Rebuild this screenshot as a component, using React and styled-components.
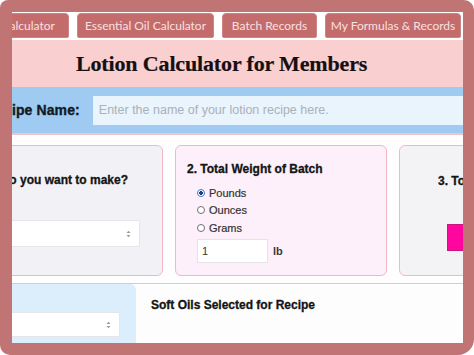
import React from "react";
import styled, { createGlobalStyle } from "styled-components";

const GlobalStyle = createGlobalStyle`
  html, body { margin: 0; padding: 0; background: #ffffff; }
  body { font-family: "Liberation Sans", Arial, sans-serif; }
  * { box-sizing: border-box; }
`;

const Frame = styled.div`
  width: 474px;
  height: 355px;
  background: #c07574;
  border-radius: 8px 10px 16px 10px;
  padding: 12px 11px 12px 12px;
  overflow: hidden;
`;

const Viewport = styled.div`
  width: 100%;
  height: 100%;
  overflow: hidden;
  background: #ffffff;
`;

const Page = styled.div`
  width: 720px;
  height: 100%;
  margin-left: -61px;
  display: flex;
  flex-direction: column;
`;

const TabBar = styled.div`
  height: 28px;
  padding-top: 1px;
  display: flex;
  gap: 8px;
  background: #ffffff;
`;

const Tab = styled.div`
  width: ${(p) => p.$w}px;
  height: 25px;
  flex: none;
  background: #c46b6c;
  border: 1px solid #cf8383;
  border-radius: 4px 4px 2px 2px;
  color: #f7e0e0;
  font-family: Lato, "Liberation Sans", sans-serif;
  font-size: 12px;
  display: flex;
  align-items: center;
  justify-content: center;
  white-space: nowrap;
`;

const Header = styled.div`
  height: 47px;
  background: #f9cfd0;
  display: flex;
  align-items: center;
  padding-left: 125px;
`;

const Title = styled.h1`
  margin: 0;
  font-family: "Liberation Serif", "Times New Roman", serif;
  font-weight: 700;
  font-size: 22px;
  letter-spacing: -0.15px;
  color: #161010;
  -webkit-text-stroke: 0.2px #161010;
  white-space: nowrap;
`;

const RecipeBar = styled.div`
  height: 48px;
  background: #9fcbf3;
  border-bottom: 2px solid #f3c3c9;
  display: flex;
  align-items: center;
  padding-left: 35px;
  gap: 13px;
`;

const RecipeLabel = styled.label`
  font-size: 14px;
  font-weight: 700;
  color: #131a22;
  -webkit-text-stroke: 0.35px #131a22;
  white-space: nowrap;
  letter-spacing: 0.1px;
`;

const RecipeInput = styled.input`
  width: 600px;
  height: 29px;
  border: none;
  outline: none;
  background: #e9f4fc;
  padding: 0 6px;
  font-family: "Liberation Sans", Arial, sans-serif;
  font-size: 12.5px;
  &::placeholder { color: #a9b1b9; }
`;

const CardsRow = styled.div`
  display: flex;
  gap: 12px;
  padding: 10px 0 7px;
  border-bottom: 1.5px solid #f4bcc4;
  background: #fefefe;
`;

const Card = styled.div`
  width: 212px;
  height: 131px;
  flex: none;
  background: ${(p) => p.$tint};
  border: 1.5px solid #f4b7c1;
  border-radius: 6px;
  display: flex;
  flex-direction: column;
  padding: 0 11px;
`;

const CardHeading = styled.div`
  margin-top: ${(p) => p.$top}px;
  margin-left: ${(p) => p.$indent || 0}px;
  font-size: 12px;
  line-height: 14px;
  font-weight: 700;
  color: #141414;
  -webkit-text-stroke: 0.3px #141414;
  white-space: nowrap;
`;

const SelectBox = styled.div`
  height: ${(p) => p.$h}px;
  margin: ${(p) => p.$m};
  background: #ffffff;
  border: 1px solid #e6e6ea;
  border-radius: 2px;
  display: flex;
  align-items: center;
  justify-content: flex-end;
  padding-right: 8px;
`;

const RadioList = styled.div`
  margin-top: 8px;
  padding-left: 10px;
  display: flex;
  flex-direction: column;
`;

const RadioRow = styled.div`
  height: 17.5px;
  display: flex;
  align-items: center;
  gap: 4px;
`;

const RadioDot = styled.span`
  width: 8px;
  height: 8px;
  border-radius: 50%;
  border: 1px solid ${(p) => (p.$checked ? "#3a78d8" : "#6f6f6f")};
  background: ${(p) => (p.$checked ? "radial-gradient(circle, #1d3f7a 0 1.6px, #ffffff 2px)" : "#ffffff")};
  flex: none;
`;

const RadioLabel = styled.span`
  font-size: 11px;
  color: #333333;
  -webkit-text-stroke: 0.2px #333333;
`;

const WeightRow = styled.div`
  margin-top: 2px;
  padding-left: 10px;
  display: flex;
  align-items: center;
  gap: 5px;
`;

const WeightInput = styled.div`
  width: 71px;
  height: 24px;
  background: #ffffff;
  border: 1px solid #e4e4e8;
  font-size: 11px;
  color: #333;
  display: flex;
  align-items: center;
  padding-left: 4px;
`;

const Unit = styled.span`
  font-size: 11px;
  font-weight: 700;
  color: #3a3a3a;
`;

const Swatch = styled.div`
  width: 116px;
  height: 27px;
  margin: 36px auto 0;
  background: #ff069e;
  border: 1px solid #c9157c;
`;

const BottomRow = styled.div`
  flex: 1;
  display: flex;
  background: #fdfdfd;
`;

const OilPanel = styled.div`
  width: 185px;
  background: #dcedfb;
  border-top-right-radius: 6px;
  padding: 28px 16px 0 10px;
`;

const OilsArea = styled.div`
  flex: 1;
  padding: 14px 0 0 15px;
`;

const OilsHeading = styled.div`
  font-size: 12px;
  line-height: 14px;
  font-weight: 700;
  color: #141414;
  -webkit-text-stroke: 0.3px #141414;
`;

const Arrows = () => (
  <svg width="5" height="8" viewBox="0 0 5 8">
    <path d="M0.5 3 L2.5 0.8 L4.5 3 Z M0.5 5 L2.5 7.2 L4.5 5 Z" fill="#9a9a9a" />
  </svg>
);

export default function App() {
  return (
    <>
      <GlobalStyle />
      <Frame>
        <Viewport>
          <Page>
            <TabBar>
              <Tab $w={118}>Lotion Calculator</Tab>
              <Tab $w={137}>Essential Oil Calculator</Tab>
              <Tab $w={95}>Batch Records</Tab>
              <Tab $w={136}>My Formulas &amp; Records</Tab>
            </TabBar>
            <Header>
              <Title>Lotion Calculator for Members</Title>
            </Header>
            <RecipeBar>
              <RecipeLabel>Recipe Name:</RecipeLabel>
              <RecipeInput readOnly placeholder="Enter the name of your lotion recipe here." />
            </RecipeBar>
            <CardsRow>
              <Card $tint="#f2f2f6">
                <CardHeading $top={27} $indent={-7}>1. What do you want to make?</CardHeading>
                <SelectBox $h={27} $m="33px 11px 0 9px">
                  <Arrows />
                </SelectBox>
              </Card>
              <Card $tint="#fdf0fb">
                <CardHeading $top={16}>2. Total Weight of Batch</CardHeading>
                <RadioList>
                  <RadioRow>
                    <RadioDot $checked />
                    <RadioLabel>Pounds</RadioLabel>
                  </RadioRow>
                  <RadioRow>
                    <RadioDot />
                    <RadioLabel>Ounces</RadioLabel>
                  </RadioRow>
                  <RadioRow>
                    <RadioDot />
                    <RadioLabel>Grams</RadioLabel>
                  </RadioRow>
                </RadioList>
                <WeightRow>
                  <WeightInput>1</WeightInput>
                  <Unit>lb</Unit>
                </WeightRow>
              </Card>
              <Card $tint="#f3f3f6">
                <CardHeading $top={28} $indent={27}>3. Total Weight of Oils</CardHeading>
                <Swatch />
              </Card>
            </CardsRow>
            <BottomRow>
              <OilPanel>
                <SelectBox $h={25} $m="0">
                  <Arrows />
                </SelectBox>
              </OilPanel>
              <OilsArea>
                <OilsHeading>Soft Oils Selected for Recipe</OilsHeading>
              </OilsArea>
            </BottomRow>
          </Page>
        </Viewport>
      </Frame>
    </>
  );
}
